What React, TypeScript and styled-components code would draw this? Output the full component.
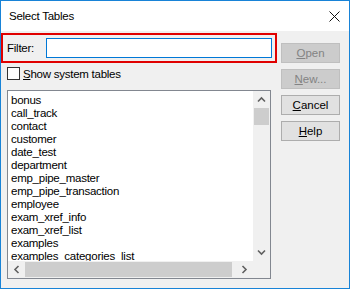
import React from "react";
import { styled, createGlobalStyle } from "styled-components";

const tables = [
  "bonus",
  "call_track",
  "contact",
  "customer",
  "date_test",
  "department",
  "emp_pipe_master",
  "emp_pipe_transaction",
  "employee",
  "exam_xref_info",
  "exam_xref_list",
  "examples",
  "examples_categories_list",
];

function Arrow({ dir }: { dir: "up" | "down" | "left" | "right" }) {
  const rot = { up: 0, right: 90, down: 180, left: 270 }[dir];
  return (
    <svg width="9" height="9" viewBox="0 0 9 9">
      <path
        d="M1 6.5 L4.5 3 L8 6.5"
        fill="none"
        stroke="#606060"
        strokeWidth="1.6"
        transform={`rotate(${rot} 4.5 4.5)`}
      />
    </svg>
  );
}

export default function App() {
  return (
    <>
      <GlobalStyle />
      <Window>
        <TitleBar>
          <Title>Select Tables</Title>
          <CloseIcon>
            <svg width="11" height="11" viewBox="0 0 11 11">
              <path d="M0.5 0.5 L10.5 10.5 M10.5 0.5 L0.5 10.5" stroke="#111" strokeWidth="1" />
            </svg>
          </CloseIcon>
        </TitleBar>

        <Body>
          <LeftCol>
            <FilterRow>
              <Label>Filter:</Label>
              <FilterInput />
            </FilterRow>

            <CheckRow>
              <CheckBox />
              <span>
                <u>S</u>how system tables
              </span>
            </CheckRow>

            <ListBox>
              <Items>
                {tables.map((t) => (
                  <Item key={t}>{t}</Item>
                ))}
              </Items>
              <VScroll>
                <ArrowBox>
                  <Arrow dir="up" />
                </ArrowBox>
                <VThumb />
                <Spacer />
                <ArrowBox>
                  <Arrow dir="down" />
                </ArrowBox>
              </VScroll>
              <HScroll>
                <ArrowBox>
                  <Arrow dir="left" />
                </ArrowBox>
                <HThumb />
                <Spacer />
                <ArrowBox>
                  <Arrow dir="right" />
                </ArrowBox>
              </HScroll>
              <Corner />
            </ListBox>
          </LeftCol>

          <ButtonCol>
            <Button disabled>
              <u>O</u>pen
            </Button>
            <Button disabled>
              <u>N</u>ew...
            </Button>
            <Button>
              <u>C</u>ancel
            </Button>
            <Button>
              <u>H</u>elp
            </Button>
          </ButtonCol>
        </Body>
      </Window>
    </>
  );
}

const GlobalStyle = createGlobalStyle`
  html, body {
    margin: 0;
    padding: 0;
    background: #ffffff;
  }
  * {
    box-sizing: border-box;
  }
`;

const Window = styled.div`
  width: 350px;
  height: 289px;
  border: 1px solid #1883d7;
  background: #f0f0f0;
  display: flex;
  flex-direction: column;
  font-family: "Liberation Sans", Arial, sans-serif;
  font-size: 11.5px;
  letter-spacing: -0.25px;
  color: #000;
  overflow: hidden;
`;

const TitleBar = styled.div`
  height: 30px;
  background: #ffffff;
  display: flex;
  align-items: center;
  justify-content: space-between;
  padding: 0 9px 0 8px;
`;

const Title = styled.span`
  font-size: 11.5px;
`;

const CloseIcon = styled.span`
  display: flex;
  margin-top: 1px;
`;

const Body = styled.div`
  flex: 1;
  display: flex;
  gap: 4px;
  padding-top: 2px;
`;

const LeftCol = styled.div`
  width: 276px;
  display: flex;
  flex-direction: column;
`;

const FilterRow = styled.div`
  height: 30px;
  border: 2px solid #e00000;
  display: flex;
  align-items: center;
  justify-content: space-between;
  padding: 0 3px 0 4px;
`;

const Label = styled.span``;

const FilterInput = styled.input`
  width: 226px;
  height: 20px;
  border: 1px solid #0078d7;
  background: #fff;
  outline: none;
  padding: 0 3px;
  font: inherit;
`;

const CheckRow = styled.label`
  display: flex;
  align-items: center;
  gap: 3px;
  margin: 4px 0 0 6px;
  height: 13px;
`;

const CheckBox = styled.span`
  width: 13px;
  height: 13px;
  border: 1px solid #333;
  background: #fff;
`;

const ListBox = styled.div`
  margin: 10px 0 0 6px;
  width: 264px;
  height: 189px;
  border: 1px solid #828790;
  background: #fff;
  display: grid;
  grid-template-columns: 1fr 17px;
  grid-template-rows: 1fr 17px;
  overflow: hidden;
`;

const Items = styled.div`
  padding: 3px 0 0 3px;
  overflow: hidden;
`;

const Item = styled.div`
  height: 13px;
  line-height: 13px;
  white-space: nowrap;
`;

const VScroll = styled.div`
  background: #f0f0f0;
  display: flex;
  flex-direction: column;
`;

const HScroll = styled.div`
  background: #f0f0f0;
  display: flex;
`;

const ArrowBox = styled.div`
  width: 17px;
  height: 17px;
  flex-shrink: 0;
  display: flex;
  align-items: center;
  justify-content: center;
`;

const VThumb = styled.div`
  height: 17px;
  margin: 0 1px;
  background: #cdcdcd;
`;

const HThumb = styled.div`
  width: 207px;
  margin: 1px 0;
  background: #cdcdcd;
`;

const Spacer = styled.div`
  flex: 1;
`;

const Corner = styled.div`
  background: #f0f0f0;
`;

const ButtonCol = styled.div`
  display: flex;
  flex-direction: column;
  gap: 6px;
  padding-top: 10px;
`;

const Button = styled.button`
  width: 59px;
  height: 20px;
  padding: 0;
  font: inherit;
  color: #000;
  background: #e1e1e1;
  border: 1px solid #adadad;

  &:disabled {
    color: #838383;
    background: #cccccc;
    border-color: #bfbfbf;
  }
`;
